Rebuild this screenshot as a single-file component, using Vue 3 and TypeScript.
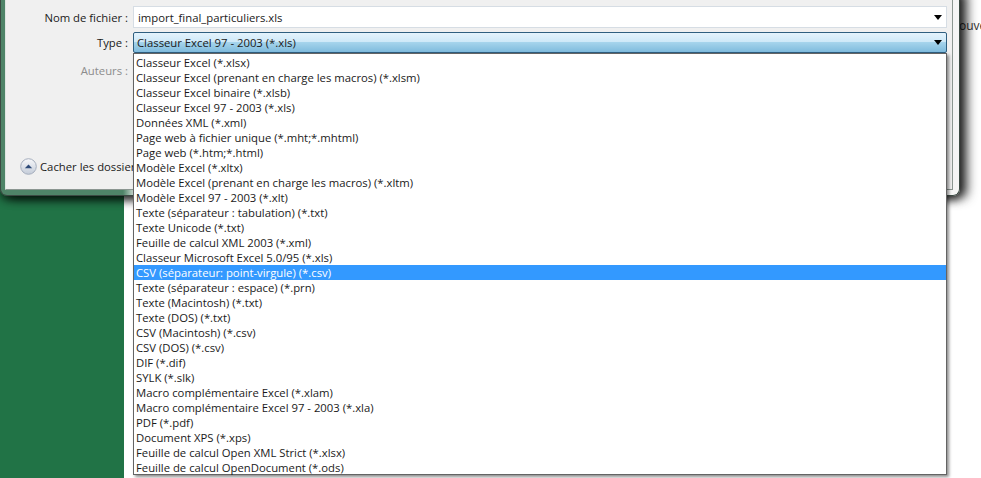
<script setup lang="ts">
const items: string[] = [
  'Classeur Excel (*.xlsx)',
  'Classeur Excel (prenant en charge les macros) (*.xlsm)',
  'Classeur Excel binaire (*.xlsb)',
  'Classeur Excel 97 - 2003 (*.xls)',
  'Données XML (*.xml)',
  'Page web à fichier unique (*.mht;*.mhtml)',
  'Page web (*.htm;*.html)',
  'Modèle Excel (*.xltx)',
  'Modèle Excel (prenant en charge les macros) (*.xltm)',
  'Modèle Excel 97 - 2003 (*.xlt)',
  'Texte (séparateur : tabulation) (*.txt)',
  'Texte Unicode (*.txt)',
  'Feuille de calcul XML 2003 (*.xml)',
  'Classeur Microsoft Excel 5.0/95 (*.xls)',
  'CSV (séparateur: point-virgule) (*.csv)',
  'Texte (séparateur : espace) (*.prn)',
  'Texte (Macintosh) (*.txt)',
  'Texte (DOS) (*.txt)',
  'CSV (Macintosh) (*.csv)',
  'CSV (DOS) (*.csv)',
  'DIF (*.dif)',
  'SYLK (*.slk)',
  'Macro complémentaire Excel (*.xlam)',
  'Macro complémentaire Excel 97 - 2003 (*.xla)',
  'PDF (*.pdf)',
  'Document XPS (*.xps)',
  'Feuille de calcul Open XML Strict (*.xlsx)',
  'Feuille de calcul OpenDocument (*.ods)',
]
const selected = 14
</script>

<template>
  <div class="screen">
    <div class="backdrop">
      <div class="green"></div>
      <span class="peek">ouve</span>
    </div>
    <section class="dialog">
      <div class="panel">
        <div class="row name-row">
          <span class="label">Nom de fichier :</span>
          <div class="field">
            <span>import_final_particuliers.xls</span>
            <svg class="arrow" width="8" height="5" viewBox="0 0 8 5"><path d="M0 0h8L4 5z" /></svg>
          </div>
        </div>
        <div class="row type-row">
          <span class="label">Type :</span>
          <div class="field active">
            <span>Classeur Excel 97 - 2003 (*.xls)</span>
            <svg class="arrow" width="8" height="5" viewBox="0 0 8 5"><path d="M0 0h8L4 5z" /></svg>
          </div>
        </div>
        <div class="row">
          <span class="label muted">Auteurs :</span>
        </div>
        <div class="hide-row">
          <svg width="17" height="17" viewBox="0 0 17 17">
            <defs>
              <linearGradient id="disc" x1="0" y1="0" x2="0" y2="1">
                <stop offset="0" stop-color="#f8f9fb" />
                <stop offset="1" stop-color="#c3cbd8" />
              </linearGradient>
            </defs>
            <circle cx="8.5" cy="8.5" r="7.8" fill="url(#disc)" stroke="#a5aebd" />
            <path d="M4.8 10.3 8.5 6.4l3.7 3.9z" fill="#2d4a78" />
          </svg>
          <span>Cacher les dossiers</span>
        </div>
      </div>
    </section>
    <ul class="dropdown">
      <li v-for="(item, i) in items" :key="item" :class="{ selected: i === selected }">{{ item }}</li>
    </ul>
  </div>
</template>

<style>
html, body { margin: 0; background: #fff; overflow: hidden; }
</style>

<style scoped>
.screen {
  position: relative;
  width: 981px;
  height: 478px;
  overflow: hidden;
  background: #fff;
  font-family: "Open Sans", "Noto Sans", sans-serif;
  font-size: 11.3px;
  color: #1a1a1a;
}
.backdrop { position: absolute; inset: 0; }
.green { width: 124px; height: 100%; background: #217346; }
.peek { position: absolute; left: 959px; top: 17px; font-size: 12px; color: #333; }
.dialog {
  position: absolute;
  left: 0;
  top: -10px;
  box-sizing: border-box;
  width: 960px;
  height: 206px;
  padding: 0 6px 5px 4px;
  background: linear-gradient(90deg, #4f8468 0, #4f8468 122px, #e6e9e7 135px, #f5f5f5 100%);
  border: 1px solid #3c4a43;
  border-top: 0;
  border-radius: 0 0 7px 7px;
  box-shadow: 7px 2px 11px rgba(0, 0, 0, 0.8), 0 4px 8px rgba(0, 0, 0, 0.55);
}
.panel {
  box-sizing: border-box;
  height: 100%;
  padding: 16px 0 0;
  background: #f0f0f0;
  border: 1px solid #8b9691;
  border-top: 0;
  border-left-color: #dfe6e2;
  display: flex;
  flex-direction: column;
}
.row {
  display: flex;
  align-items: center;
  height: 22px;
  margin-bottom: 3px;
  flex: none;
}
.name-row { margin-bottom: 4px; }
.type-row { height: 21px; margin-bottom: 6px; }
.label {
  box-sizing: border-box;
  width: 127px;
  padding-right: 5px;
  text-align: right;
  flex: none;
}
.muted { color: #8c8c8c; }
.field {
  box-sizing: border-box;
  width: 814px;
  height: 100%;
  padding: 0 4px 0 4px;
  display: flex;
  align-items: center;
  justify-content: space-between;
  background: #fff;
  border: 1px solid #d6dde4;
}
.field.active {
  padding-left: 3px;
  border: 1px solid #2f5f80;
  border-radius: 2px;
  background: linear-gradient(#e4f3fc 0%, #cfe9f8 45%, #a5d4ec 50%, #7fbbdd 100%);
}
.arrow { fill: #000; flex: none; }
.hide-row {
  display: flex;
  align-items: center;
  gap: 3px;
  margin: 74px 0 0 14px;
}
.dropdown {
  position: absolute;
  left: 133px;
  top: 53px;
  box-sizing: border-box;
  width: 814px;
  height: 422px;
  margin: 0;
  padding: 1px 0 0;
  list-style: none;
  background: #fff;
  border: 1px solid #646464;
  box-shadow: 2px 2px 3px rgba(0, 0, 0, 0.45);
}
.dropdown li {
  height: 15px;
  line-height: 15px;
  padding-left: 2px;
  white-space: nowrap;
}
.dropdown li:last-child { height: 14px; }
.dropdown li.selected {
  background: #3399ff;
  color: #fff;
}
</style>
